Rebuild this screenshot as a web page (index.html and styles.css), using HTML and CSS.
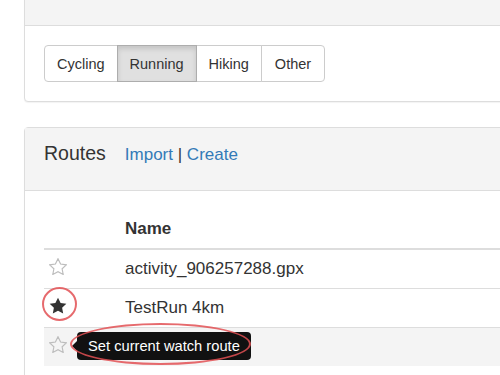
FILE: index.html
```html
<!DOCTYPE html>
<html lang="en">
<head>
    <meta charset="UTF-8">
    <title>Routes</title>
    <link rel="stylesheet" href="styles.css">
</head>
<body>

    <div class="page">
        <div class="panel panel-top">
            <div class="panel-heading"></div>
            <div class="panel-body">
                <div class="btn-group">
                    <button class="btn">Cycling</button>
                    <button class="btn active">Running</button>
                    <button class="btn">Hiking</button>
                    <button class="btn">Other</button>
                </div>
            </div>
        </div>

        <div class="panel">
            <div class="panel-heading routes-heading">
                <span class="panel-title">Routes</span>
                <span class="panel-links"><a href="#">Import</a> | <a href="#">Create</a></span>
            </div>
            <div class="panel-body table-body">
                <table class="routes">
                    <thead>
                        <tr>
                            <th class="col-star"></th>
                            <th>Name</th>
                        </tr>
                    </thead>
                    <tbody>
                        <tr>
                            <td class="col-star">
                                <svg class="star star-empty" viewBox="2 2 20 19"><polygon points="12,2.8 14.9,8.7 21.3,9.6 16.6,14.1 17.8,20.4 12,17.4 6.2,20.4 7.4,14.1 2.7,9.6 9.1,8.7"/></svg>
                            </td>
                            <td>activity_906257288.gpx</td>
                        </tr>
                        <tr>
                            <td class="col-star">
                                <svg class="star star-full" viewBox="2 2 20 19"><polygon points="12,2.8 14.9,8.7 21.3,9.6 16.6,14.1 17.8,20.4 12,17.4 6.2,20.4 7.4,14.1 2.7,9.6 9.1,8.7"/></svg>
                                <span class="mark mark-circle"></span>
                            </td>
                            <td>TestRun 4km</td>
                        </tr>
                        <tr class="hover">
                            <td class="col-star">
                                <svg class="star star-empty" viewBox="2 2 20 19"><polygon points="12,2.8 14.9,8.7 21.3,9.6 16.6,14.1 17.8,20.4 12,17.4 6.2,20.4 7.4,14.1 2.7,9.6 9.1,8.7"/></svg>
                                <div class="tooltip">Set current watch route</div>
                                <span class="mark mark-ellipse"></span>
                            </td>
                            <td></td>
                        </tr>
                    </tbody>
                </table>
            </div>
        </div>
    </div>

</body>
</html>
```

FILE: styles.css
```css
body {
    font-family: "Liberation Sans", Arial, sans-serif;
    color: #333;
    background-color: #fff;
    margin: 0;
    padding: 0;
    overflow: hidden;
}

.page {
    padding-left: 24px;
}

.panel {
    width: 540px;
    border: 1px solid #ddd;
    border-radius: 4px;
    box-shadow: 0 1px 1px rgba(0, 0, 0, 0.05);
    background-color: #fff;
    margin-bottom: 25px;
}

.panel-top {
    margin-top: -1px;
    border-top-left-radius: 0;
}

.panel-heading {
    background-color: #f4f4f4;
    border-bottom: 1px solid #ddd;
    height: 25px;
}

.panel-body {
    padding: 19px;
}

.btn-group {
    display: flex;
}

.btn {
    font-family: inherit;
    font-size: 14.5px;
    color: #333;
    background-color: #fff;
    border: 1px solid #ccc;
    height: 37px;
    padding: 0 12px;
    margin-left: -1px;
    cursor: pointer;
}

.btn:first-child {
    margin-left: 0;
    border-radius: 4px 0 0 4px;
}

.btn:last-child {
    border-radius: 0 4px 4px 0;
    padding: 0 13px;
}

.btn.active {
    background-color: #e0e0e0;
    border-color: #adadad;
    box-shadow: inset 0 3px 5px rgba(0, 0, 0, 0.125);
    position: relative;
}

.routes-heading {
    height: 48px;
    padding: 14px 19px 0;
    display: flex;
    align-items: baseline;
    line-height: 22px;
}

.panel-title {
    font-size: 19.5px;
    margin-right: 19px;
}

.panel-links {
    font-size: 17px;
}

.panel-links a {
    color: #337ab7;
    text-decoration: none;
}

.table-body {
    padding-top: 19px;
}

.routes {
    width: 100%;
    border-collapse: collapse;
    font-size: 17px;
    line-height: 22px;
}

.routes th {
    text-align: left;
    font-weight: bold;
    padding: 8px 0;
    border-bottom: 2px solid #ddd;
}

.routes td {
    padding: 8px 0;
    border-top: 1px solid #ddd;
    height: 22px;
}

.routes tbody tr:first-child td {
    border-top: none;
}

.routes tr.hover td {
    background-color: #f4f4f4;
}

.routes .col-star {
    box-sizing: border-box;
    width: 81px;
    position: relative;
}

.routes td.col-star {
    padding-left: 5px;
}

.star {
    width: 18px;
    height: 17px;
    vertical-align: -1px;
    display: inline-block;
}

.star-empty polygon {
    fill: #fff;
    stroke: #bdbdbd;
    stroke-width: 1.3;
}

.routes tr.hover .star-empty polygon {
    fill: #f4f4f4;
}

.star-full polygon {
    fill: #333;
}

.tooltip {
    position: absolute;
    left: 33px;
    top: 50%;
    transform: translateY(-50%);
    margin-top: -1px;
    background-color: #111;
    color: #fff;
    font-size: 14.7px;
    line-height: 18px;
    padding: 5px 11px;
    border-radius: 4px;
    white-space: nowrap;
}

.tooltip::before {
    content: "";
    position: absolute;
    left: -5px;
    top: 50%;
    margin-top: -5px;
    border-style: solid;
    border-width: 5px 5px 5px 0;
    border-color: transparent #111 transparent transparent;
}

.mark {
    position: absolute;
    border: 2.5px solid rgba(226, 80, 84, 0.85);
    border-radius: 50%;
    box-sizing: border-box;
}

.mark-circle {
    left: -2px;
    top: -2px;
    width: 35px;
    height: 34px;
}

.mark-ellipse {
    left: 26px;
    top: -5px;
    width: 181px;
    height: 42px;
}
```
